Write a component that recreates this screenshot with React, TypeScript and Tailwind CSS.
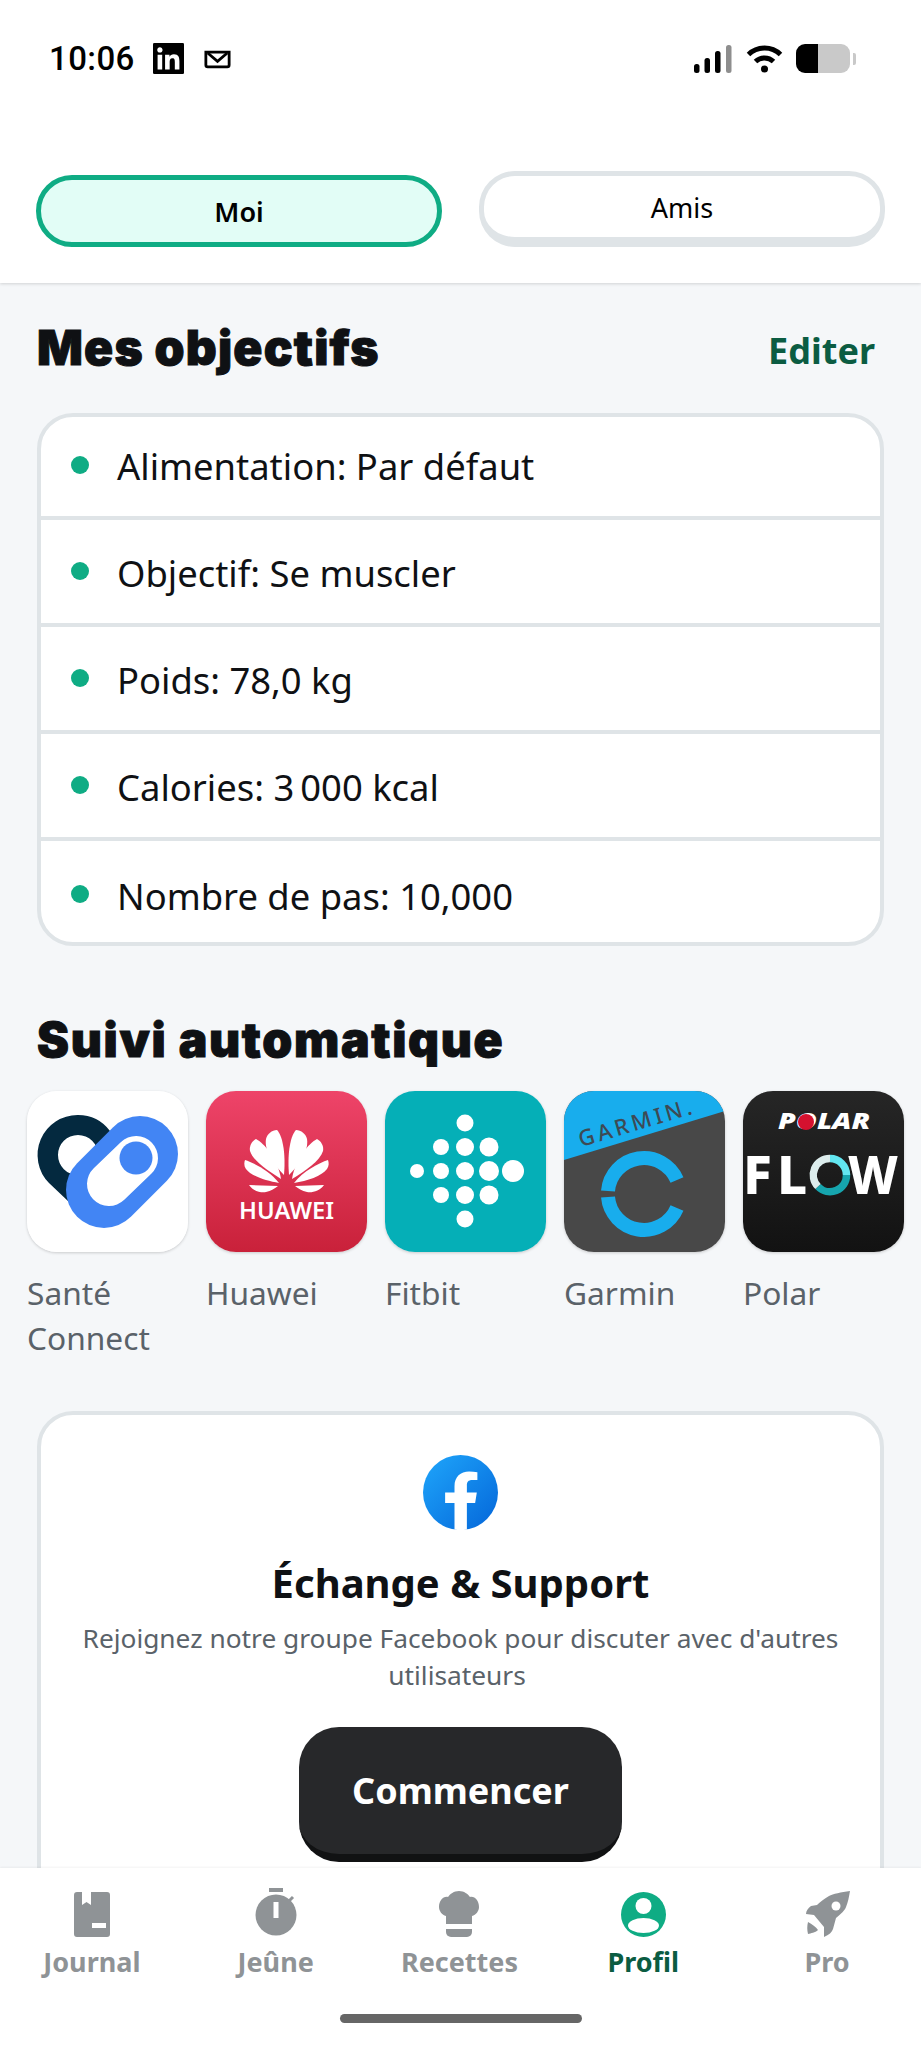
import type { ReactNode } from 'react';

const goals = [
  'Alimentation: Par défaut',
  'Objectif: Se muscler',
  'Poids: 78,0 kg',
  'Calories: 3\u202f000 kcal',
  'Nombre de pas: 10,000',
];

function StatusBar() {
  return (
    <div className="flex items-center justify-between pl-[49px] pr-[65px] pt-[43px] h-[74px]">
      <div className="flex items-center">
        <span className="font-['Roboto'] font-medium text-[33px] leading-[31px] text-black tracking-[0.4px]">10:06</span>
        <svg viewBox="0 0 24 24" className="w-[31px] h-[31px] ml-[18px]">
          <rect width="24" height="24" fill="#000" rx="1" />
          <path
            fill="#fff"
            d="M20.447 20.452h-3.554v-5.569c0-1.328-.027-3.037-1.852-3.037-1.853 0-2.136 1.445-2.136 2.939v5.667H9.351V9h3.414v1.561h.046c.477-.9 1.637-1.85 3.37-1.85 3.601 0 4.267 2.37 4.267 5.455v6.286zM5.337 7.433c-1.144 0-2.063-.926-2.063-2.065 0-1.138.92-2.063 2.063-2.063 1.14 0 2.064.925 2.064 2.063 0 1.139-.925 2.065-2.064 2.065zm1.782 13.019H3.555V9h3.564v11.452z"
          />
        </svg>
        <svg viewBox="0 0 29 20" className="w-[27px] h-[19px] ml-[20px] mt-[2px]" fill="none" stroke="#000" strokeWidth="3">
          <path d="M2 2h25v14a2 2 0 0 1-2 2H4a2 2 0 0 1-2-2z" />
          <path d="M4 3l10.500 9L25 3" />
        </svg>
      </div>
      <div className="flex items-center">
        <svg viewBox="0 0 38 28" className="w-[38px] h-[28px]">
          <rect x="0" y="19" width="5.500" height="9" rx="2.500" fill="#000" />
          <rect x="10.500" y="13" width="5.500" height="15" rx="2.500" fill="#000" />
          <rect x="21" y="6" width="5.500" height="22" rx="2.500" fill="#000" />
          <rect x="32" y="0" width="5.500" height="28" rx="2.500" fill="#8e8e8e" />
        </svg>
        <svg viewBox="0 0 37 29" className="w-[37px] h-[29px] ml-[14px]" fill="none" stroke="#000" strokeWidth="5">
          <path d="M2.500 10.500a23 23 0 0 1 32 0" />
          <path d="M9.500 17.500a13 13 0 0 1 18 0" />
          <circle cx="18.500" cy="25" r="3.500" fill="#000" stroke="none" />
        </svg>
        <div className="flex items-center ml-[13px]">
          <div className="flex w-[54px] h-[29px] rounded-[9px] overflow-hidden">
            <div className="w-[22px] bg-black" />
            <div className="flex-1 bg-[#c9c9c9]" />
          </div>
          <div className="w-[3px] h-[12px] ml-[3px] rounded-r-[2px] bg-[#c9c9c9]" />
        </div>
      </div>
    </div>
  );
}

function Header() {
  return (
    <header className="h-[283px] bg-white shadow-[0_1px_3px_rgba(0,0,0,0.15)] relative z-10">
      <StatusBar />
      <div className="flex items-end gap-[37px] px-[36px] mt-[97px]">
        <div className="flex-1 h-[72px] flex items-center justify-center rounded-[36px] border-[5px] border-[#0fac84] bg-[#e2fdf6]">
          <span className="font-['Noto_Sans'] font-semibold text-[27px] text-black mt-[2px]">Moi</span>
        </div>
        <div className="flex-1 h-[76px] flex items-center justify-center rounded-[36px] border-[5px] border-b-[10px] border-[#dfe4e7] bg-white">
          <span className="font-['Noto_Sans'] text-[27px] text-black mt-[3px]">Amis</span>
        </div>
      </div>
    </header>
  );
}

function GoalsCard() {
  return (
    <div className="mx-[37px] mt-[33px] rounded-[36px] border-[4px] border-[#dfe4e7] bg-white overflow-hidden">
      {goals.map((goal, i) => (
        <div
          key={goal}
          className={`flex items-center pl-[30px] ${i === goals.length - 1 ? 'h-[101px] pt-[8px]' : i === 0 ? 'h-[103px] pb-[1px] border-b-[4px] border-[#dfe4e7]' : 'h-[107px] border-b-[4px] border-[#dfe4e7] pt-[2px]'}`}
        >
          <span className="w-[18px] h-[18px] rounded-full bg-[#0fac84] mb-[3px]" />
          <span className="ml-[28px] font-['Noto_Sans'] text-[36.400px] leading-[50px] text-[#0f1114]">{goal}</span>
        </div>
      ))}
    </div>
  );
}

function SanteIcon() {
  return (
    <svg viewBox="0 0 161 161" className="w-full h-full bg-white">
      <path
        fill="#04293f"
        fillRule="evenodd"
        d="M51 24A40 40 0 0 0 22 92L62 130L110 60L83 40A40 40 0 0 0 51 24ZM51 44A20 20 0 1 1 51 84A20 20 0 0 1 51 44Z"
      />
      <line x1="113" y1="63" x2="77" y2="99" stroke="#4285f4" strokeWidth="76" strokeLinecap="round" />
      <line x1="109" y1="67" x2="82" y2="93" stroke="#fff" strokeWidth="44" strokeLinecap="round" />
      <circle cx="109" cy="67" r="16.500" fill="#4285f4" />
    </svg>
  );
}

function HuaweiIcon() {
  const petals = (
    <g fill="#fff">
      <path d="M78 84C68 74 58 60 60 48C61 43 66 39 71 39C76 44 80 60 78 84Z" />
      <path d="M75 88C62 80 47 70 44 60C43 55 46 50 50 48C58 52 72 68 75 88Z" />
      <path d="M73 92C60 90 45 85 40 78C38 75 38 72 39 69C48 72 64 80 73 92Z" />
      <path d="M72 95L43 94C47 100 55 102 60 101C65 100 69 97 72 95Z" />
    </g>
  );
  return (
    <svg viewBox="0 0 161 161" className="w-full h-full">
      <defs>
        <linearGradient id="huaweiBg" x1="0" y1="0" x2="0" y2="1">
          <stop offset="0%" stopColor="#ee4469" />
          <stop offset="100%" stopColor="#c9213a" />
        </linearGradient>
      </defs>
      <rect width="161" height="161" fill="url(#huaweiBg)" />
      {petals}
      <g transform="translate(161 0) scale(-1 1)">{petals}</g>
      <text x="33" y="128" fill="#fff" fontFamily="Noto Sans" fontWeight="600" fontSize="23" textLength="95" lengthAdjust="spacingAndGlyphs">
        HUAWEI
      </text>
    </svg>
  );
}

function FitbitIcon() {
  const dots = [
    [32, 80, 7],
    [56, 56, 8],
    [56, 80, 8],
    [56, 104, 8],
    [80, 32, 8.500],
    [80, 56, 9],
    [80, 80, 9],
    [80, 104, 9],
    [80, 128, 8.500],
    [104, 56, 9.500],
    [104, 80, 10],
    [104, 104, 9.500],
    [128, 80, 11],
  ];
  return (
    <svg viewBox="0 0 161 161" className="w-full h-full bg-[#05afb7]">
      {dots.map(([cx, cy, r]) => (
        <circle key={`${cx}-${cy}`} cx={cx} cy={cy} r={r} fill="#fff" />
      ))}
    </svg>
  );
}

function GarminIcon() {
  return (
    <svg viewBox="0 0 161 161" className="w-full h-full bg-[#484848]">
      <path d="M0 0H161V20L0 69Z" fill="#18aded" />
      <text
        x="0"
        y="0"
        transform="translate(17 56) rotate(-16.500)"
        fill="#3e4a54"
        fontFamily="Noto Sans"
        fontWeight="500"
        fontSize="22"
        textLength="117"
      >
        GARMIN.
      </text>
      <g fill="none" stroke="#18aded" strokeWidth="14">
        <path d="M44 100A36 36 0 0 1 113 89" />
        <path d="M44 106A36 36 0 0 0 113 117" />
      </g>
    </svg>
  );
}

function PolarIcon() {
  return (
    <svg viewBox="0 0 161 161" className="w-full h-full">
      <defs>
        <linearGradient id="polarBg" x1="0" y1="0" x2="0" y2="1">
          <stop offset="0%" stopColor="#262626" />
          <stop offset="100%" stopColor="#121212" />
        </linearGradient>
      </defs>
      <rect width="161" height="161" fill="url(#polarBg)" />
      <text x="35" y="38" fill="#fff" fontFamily="Noto Sans" fontWeight="900" fontStyle="italic" fontSize="22" textLength="92" lengthAdjust="spacingAndGlyphs">
        POLAR
      </text>
      <circle cx="63" cy="31" r="8" fill="#d5112f" />
      <g fill="#fff" fontFamily="Noto Sans" fontWeight="800" fontSize="53">
        <text x="0" y="103">F</text>
        <text x="34" y="103">L</text>
        <text x="105" y="103" textLength="50" lengthAdjust="spacingAndGlyphs">W</text>
      </g>
      <g fill="none" strokeWidth="7.500">
        <path d="M87 67.500A16.500 16.500 0 0 1 103.500 84" stroke="#62e6f0" />
        <path d="M103.500 84A16.500 16.500 0 0 1 75 95.500" stroke="#16a5ae" />
        <path d="M75 95.500A16.500 16.500 0 0 1 87 67.500" stroke="#dcecec" />
      </g>
    </svg>
  );
}

const apps: { name: string; icon: ReactNode }[] = [
  { name: 'Santé Connect', icon: <SanteIcon /> },
  { name: 'Huawei', icon: <HuaweiIcon /> },
  { name: 'Fitbit', icon: <FitbitIcon /> },
  { name: 'Garmin', icon: <GarminIcon /> },
  { name: 'Polar', icon: <PolarIcon /> },
];

function AutoTracking() {
  return (
    <div className="flex gap-[18px] pl-[27px] mt-[21px]">
      {apps.map(app => (
        <div key={app.name} className="w-[161px] shrink-0">
          <div className="w-[161px] h-[161px] rounded-[30px] overflow-hidden shadow-[0_1px_3px_rgba(0,0,0,0.18)]">{app.icon}</div>
          <p className="mt-[18px] font-['Noto_Sans'] text-[31.700px] leading-[45px] text-[#5a6269]">{app.name}</p>
        </div>
      ))}
    </div>
  );
}

function FacebookCard() {
  return (
    <div className="mx-[37px] mt-[51px] pt-[40px] pb-[60px] flex flex-col items-center rounded-t-[36px] border-[4px] border-[#dfe4e7] bg-white">
      <svg viewBox="0 0 40 40" className="w-[75px] h-[75px]">
        <defs>
          <linearGradient id="fbBg" x1="0" y1="0" x2="1" y2="1">
            <stop offset="0%" stopColor="#1fa6fb" />
            <stop offset="100%" stopColor="#0466d9" />
          </linearGradient>
        </defs>
        <circle cx="20" cy="20" r="20" fill="url(#fbBg)" />
        <path
          fill="#fff"
          d="M27.800 25.600l.9-5.600h-5.300v-3.900c0-1.600.6-2.800 3-2.800H29V9.200c-1.400-.2-3-.4-4.400-.4-4.600 0-7.800 2.800-7.800 7.800V20h-5v5.600h5v14.100c1.100.2 2.200.3 3.300.3 1.100 0 2.200-.1 3.300-.3V25.600h4.400z"
        />
      </svg>
      <h3 className="mt-[25px] font-['Noto_Sans'] font-bold text-[40px] leading-[56px] text-[#0f1114]">Échange &amp; Support</h3>
      <p className="mt-[9px] px-[30px] text-center font-['Noto_Sans'] text-[26.300px] leading-[37px] text-[#5a6269]">
        Rejoignez notre groupe Facebook pour discuter avec d'autres utilisateurs{'\u00a0'}
      </p>
      <div className="mt-[33px] w-[323px] h-[135px] flex items-center justify-center rounded-[40px] bg-[#27282a] border-b-[8px] border-[#111213] shrink-0">
        <span className="font-['Noto_Sans'] font-bold text-[36px] text-white">Commencer</span>
      </div>
    </div>
  );
}

const GREY = '#8f9396';

function JournalIcon() {
  return (
    <svg viewBox="0 0 36 45" className="w-[36px] h-[45px]">
      <path fill={GREY} d="M3 0H8V13L12.500 10L17 13V0H33a3 3 0 0 1 3 3V42a3 3 0 0 1-3 3H3a3 3 0 0 1-3-3V3a3 3 0 0 1 3-3Z" />
      <rect x="18" y="31" width="14" height="5" fill="#fff" />
    </svg>
  );
}

function JeuneIcon() {
  return (
    <svg viewBox="0 0 46 49" className="w-[46px] h-[49px]">
      <rect x="16" y="0" width="14" height="4" fill={GREY} />
      <path d="M36 13l4-4" stroke={GREY} strokeWidth="3" />
      <circle cx="23" cy="27" r="20.500" fill={GREY} />
      <rect x="20.500" y="14" width="5" height="16" fill="#fff" />
    </svg>
  );
}

function RecettesIcon() {
  return (
    <svg viewBox="0 0 40 46" className="w-[40px] h-[46px]" fill={GREY}>
      <path d="M20 0C25 0 29 3 31 6C36 5 40 10 40 16C40 20 37 24 33 25V33H7V25C3 24 0 20 0 16C0 10 4 5 9 6C11 3 15 0 20 0Z" />
      <path d="M7 38H33V41a5 5 0 0 1-5 5H12a5 5 0 0 1-5-5Z" />
    </svg>
  );
}

function ProfilIcon() {
  return (
    <svg viewBox="0 0 45 45" className="w-[45px] h-[45px]">
      <circle cx="22.500" cy="22.500" r="22.500" fill="#0fac84" />
      <circle cx="22.500" cy="14" r="8" fill="#fff" />
      <ellipse cx="22.500" cy="33.500" rx="15.500" ry="7.500" fill="#fff" />
    </svg>
  );
}

function ProIcon() {
  return (
    <svg viewBox="0 0 45 46" className="w-[45px] h-[46px]" fill={GREY}>
      <path d="M45 0C36 1 28 3 24 5C19 8 15 11 12 14L6 15C3 17 1 20 1 23L9 24L19 36L19 46C24 44 27 41 28 38L31 27C36 23 40 19 41 16C43 11 44 6 45 0Z" />
      <circle cx="31" cy="15" r="4.500" fill="#fff" />
      <path d="M3 31C7 33 11 36 13 39C10 42 6 42 3 43C2 39 2 35 3 31Z" />
    </svg>
  );
}

const navItems = [
  { label: 'Journal', icon: <JournalIcon /> },
  { label: 'Jeûne', icon: <JeuneIcon /> },
  { label: 'Recettes', icon: <RecettesIcon /> },
  { label: 'Profil', icon: <ProfilIcon />, active: true },
  { label: 'Pro', icon: <ProIcon /> },
];

function BottomNav() {
  return (
    <nav className="h-[180px] shrink-0 bg-white shadow-[0_-1px_2px_rgba(0,0,0,0.05)] relative z-10">
      <div className="grid grid-cols-5 pt-[20px] pr-[2px]">
        {navItems.map(item => (
          <div key={item.label} className="flex flex-col items-center">
            <div className="h-[49px] flex items-end">{item.icon}</div>
            <span
              className={`mt-[6px] font-['Noto_Sans'] font-bold text-[27px] leading-[38px] ${item.active ? 'text-[#0b5c42]' : 'text-[#8f9396]'}`}
            >
              {item.label}
            </span>
          </div>
        ))}
      </div>
      <div className="mx-auto mt-[33px] w-[242px] h-[9px] rounded-full bg-[#666]" />
    </nav>
  );
}

export default function App() {
  return (
    <div className="w-[921px] h-[2048px] flex flex-col overflow-hidden bg-[#f5f7f9]">
      <Header />
      <main className="flex-1 overflow-hidden">
        <div className="flex items-center justify-between pl-[37px] pr-[46px] pt-[32px] h-[97px]">
          <h2 className="font-['Inter'] font-black text-[48px] leading-[60px] tracking-[1.2px] [-webkit-text-stroke:1px_#0f1114] text-[#0f1114]">Mes objectifs</h2>
          <span className="font-['Noto_Sans'] font-bold text-[36px] text-[#0b5c42] mt-[6px]">Editer</span>
        </div>
        <GoalsCard />
        <h2 className="mt-[64px] pl-[37px] font-['Inter'] font-black text-[48px] leading-[60px] tracking-[1.7px] [-webkit-text-stroke:1px_#0f1114] text-[#0f1114]">Suivi automatique</h2>
        <AutoTracking />
        <FacebookCard />
      </main>
      <BottomNav />
    </div>
  );
}
